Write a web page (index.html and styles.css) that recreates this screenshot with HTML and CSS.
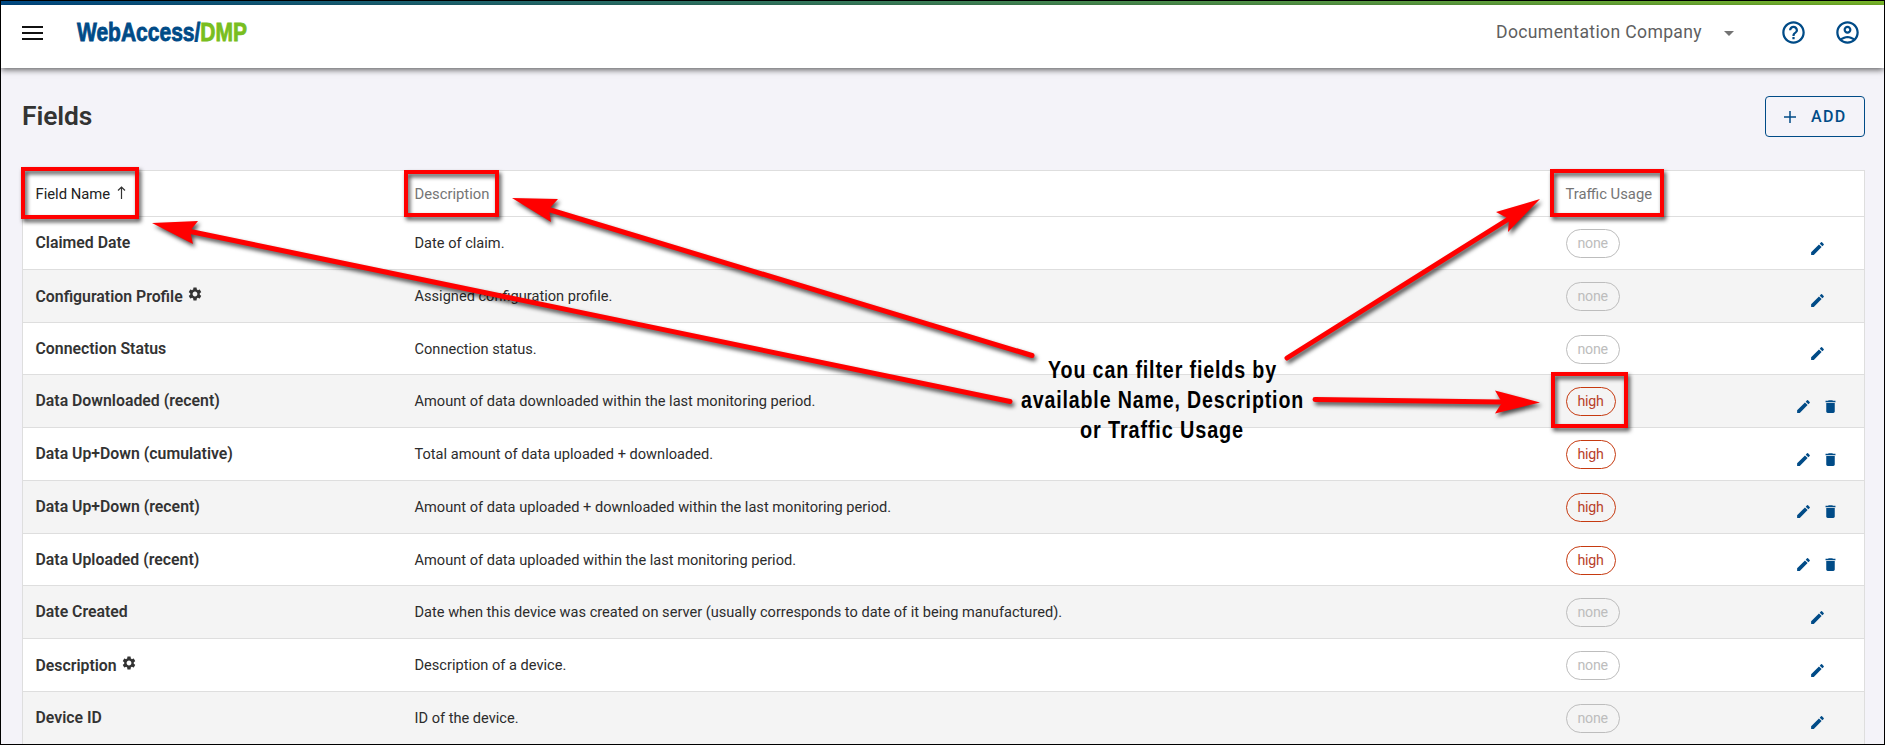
FILE: index.html
```html
<!DOCTYPE html>
<html lang="en">
<head>
<meta charset="utf-8">
<title>Fields</title>
<link rel="stylesheet" href="styles.css">
</head>
<body>
<svg class="defs" aria-hidden="true">
  <symbol id="pen" viewBox="0 0 24 24"><path d="M3 17.25V21h3.75L17.81 9.94l-3.75-3.75L3 17.25zM20.71 7.04a1 1 0 0 0 0-1.41l-2.34-2.34a1 1 0 0 0-1.41 0l-1.83 1.83 3.75 3.75 1.83-1.83z"/></symbol>
  <symbol id="bin" viewBox="0 0 24 24"><path d="M6 19c0 1.100.9 2 2 2h8c1.100 0 2-.9 2-2V7H6v12zM19 4h-3.500l-1-1h-5l-1 1H5v2h14V4z"/></symbol>
  <symbol id="gear" viewBox="0 0 24 24"><path d="M19.140 12.940c.040-.3.060-.610.060-.940 0-.320-.020-.640-.070-.940l2.030-1.580c.180-.140.230-.410.120-.610l-1.920-3.320c-.120-.220-.370-.290-.590-.220l-2.390.960c-.5-.380-1.030-.7-1.620-.940l-.360-2.540c-.040-.240-.240-.410-.480-.410h-3.840c-.240 0-.430.170-.470.410l-.360 2.540c-.590.240-1.130.570-1.620.940l-2.390-.960c-.220-.080-.470 0-.590.220L2.740 8.870c-.120.210-.080.470.120.610l2.030 1.580c-.050.3-.090.630-.090.940s.020.640.070.940l-2.030 1.580c-.180.140-.230.410-.120.610l1.920 3.320c.120.220.370.290.590.220l2.390-.960c.5.380 1.030.7 1.620.940l.360 2.540c.050.240.240.410.480.410h3.840c.240 0 .440-.170.470-.410l.360-2.540c.590-.240 1.130-.560 1.620-.940l2.390.960c.220.080.470 0 .590-.220l1.920-3.320c.120-.220.070-.470-.120-.610l-2.010-1.580zM12 15.600c-1.980 0-3.600-1.620-3.600-3.600s1.620-3.600 3.600-3.600 3.600 1.620 3.600 3.600-1.620 3.600-3.600 3.600z"/></symbol>
</svg>
<div class="app">
  <div class="stripe"></div>
  <header class="topbar">
    <svg class="menu" viewBox="0 0 21 14"><path d="M0 1h21M0 7h21M0 13h21"/></svg>
    <svg class="logo" viewBox="0 0 170 26"><text class="logo-a" x="0" y="20" textLength="170" lengthAdjust="spacingAndGlyphs">WebAccess/<tspan class="logo-b">DMP</tspan></text></svg>
    <span class="company">Documentation Company</span>
    <span class="caret"></span>
    <svg class="round help" viewBox="0 0 24 24"><path d="M11 18h2v-2h-2v2zm1-16C6.480 2 2 6.480 2 12s4.480 10 10 10 10-4.480 10-10S17.520 2 12 2zm0 18c-4.410 0-8-3.590-8-8s3.590-8 8-8 8 3.590 8 8-3.590 8-8 8zm0-14c-2.210 0-4 1.790-4 4h2c0-1.100.9-2 2-2s2 .9 2 2c0 2-3 1.750-3 5h2c0-2.250 3-2.500 3-5 0-2.210-1.790-4-4-4z"/></svg>
    <svg class="round user" viewBox="0 0 24 24"><path fill-rule="evenodd" d="M12 2C6.480 2 2 6.480 2 12s4.480 10 10 10 10-4.480 10-10S17.520 2 12 2zM7.350 18.500C8.660 17.560 10.260 17 12 17s3.340.56 4.650 1.500C15.340 19.440 13.740 20 12 20s-3.340-.56-4.650-1.500zm10.790-1.380C16.450 15.800 14.320 15 12 15s-4.450.8-6.140 2.120C4.700 15.730 4 13.950 4 12c0-4.420 3.580-8 8-8s8 3.580 8 8c0 1.950-.7 3.730-1.860 5.120zM12 6c-1.930 0-3.500 1.570-3.500 3.500S10.070 13 12 13s3.500-1.570 3.500-3.500S13.930 6 12 6zm0 5c-.83 0-1.500-.67-1.500-1.500S11.170 8 12 8s1.500.67 1.500 1.500S12.830 11 12 11z"/></svg>
  </header>
  <main class="page">
    <div class="heading">
      <h1>Fields</h1>
      <button class="add"><svg viewBox="0 0 12 12"><path d="M6 0v12M0 6h12"/></svg><span>ADD</span></button>
    </div>
    <div class="table">
      <div class="row head"><div class="name">Field Name<svg class="sort" viewBox="0 0 9 13"><path d="M4.500 13V1M1 4.500l3.500-3.500L8 4.500"/></svg></div><div>Description</div><div>Traffic Usage</div><div></div></div>
      <div class="row"><div class="name">Claimed Date</div><div>Date of claim.</div><div><span class="chip">none</span></div><div class="acts"><svg><use href="#pen"/></svg></div></div>
      <div class="row"><div class="name">Configuration Profile<svg class="gear"><use href="#gear"/></svg></div><div>Assigned configuration profile.</div><div><span class="chip">none</span></div><div class="acts"><svg><use href="#pen"/></svg></div></div>
      <div class="row"><div class="name">Connection Status</div><div>Connection status.</div><div><span class="chip">none</span></div><div class="acts"><svg><use href="#pen"/></svg></div></div>
      <div class="row"><div class="name">Data Downloaded (recent)</div><div>Amount of data downloaded within the last monitoring period.</div><div><span class="chip high">high</span></div><div class="acts"><svg><use href="#pen"/></svg><svg><use href="#bin"/></svg></div></div>
      <div class="row"><div class="name">Data Up+Down (cumulative)</div><div>Total amount of data uploaded + downloaded.</div><div><span class="chip high">high</span></div><div class="acts"><svg><use href="#pen"/></svg><svg><use href="#bin"/></svg></div></div>
      <div class="row"><div class="name">Data Up+Down (recent)</div><div>Amount of data uploaded + downloaded within the last monitoring period.</div><div><span class="chip high">high</span></div><div class="acts"><svg><use href="#pen"/></svg><svg><use href="#bin"/></svg></div></div>
      <div class="row"><div class="name">Data Uploaded (recent)</div><div>Amount of data uploaded within the last monitoring period.</div><div><span class="chip high">high</span></div><div class="acts"><svg><use href="#pen"/></svg><svg><use href="#bin"/></svg></div></div>
      <div class="row"><div class="name">Date Created</div><div>Date when this device was created on server (usually corresponds to date of it being manufactured).</div><div><span class="chip">none</span></div><div class="acts"><svg><use href="#pen"/></svg></div></div>
      <div class="row"><div class="name">Description<svg class="gear"><use href="#gear"/></svg></div><div>Description of a device.</div><div><span class="chip">none</span></div><div class="acts"><svg><use href="#pen"/></svg></div></div>
      <div class="row"><div class="name">Device ID</div><div>ID of the device.</div><div><span class="chip">none</span></div><div class="acts"><svg><use href="#pen"/></svg></div></div>
    </div>
  </main>
  <svg class="notes" viewBox="0 0 1885 745">
    <g class="marks">
      <rect x="23" y="169" width="114" height="48"/>
      <rect x="406" y="172" width="91" height="43"/>
      <rect x="1552" y="171" width="110" height="44"/>
      <rect x="1553" y="374" width="73" height="52"/>
      <path d="M188 231L1010 401.500M547 209L1032 355.500M1507 220L1287 358M1500 402L1315 399.500"/>
      <path class="tip" d="M152 223l46-2-8 10 3 13zM512 198l46 1-9 10 2 13zM1540 199l-44 13 13 7-1 13zM1540 402.500l-45-12 7 12-7 11z"/>
    </g>
    <g class="caption">
      <text x="1048" y="377.500" textLength="229" lengthAdjust="spacingAndGlyphs">You can filter fields by</text>
      <text x="1021" y="408" textLength="283" lengthAdjust="spacingAndGlyphs">available Name, Description</text>
      <text x="1080" y="438" textLength="164" lengthAdjust="spacingAndGlyphs">or Traffic Usage</text>
    </g>
  </svg>
</div>
</body>
</html>
```
FILE: styles.css
```css
* { box-sizing: border-box; }
body { margin: 0; font-family: Roboto, "Liberation Sans", sans-serif; color: #2c2c2c; }
.defs { position: absolute; width: 0; height: 0; }
.app { position: relative; width: 1885px; height: 745px; overflow: hidden; border: 1px solid #000; background: #f4f3f9; display: flex; flex-direction: column; }
.stripe { flex: none; height: 4px; background: linear-gradient(90deg, #004b87, #7ab929); }
.topbar { flex: none; height: 63px; display: flex; align-items: flex-start; padding-left: 21px; background: #fff; box-shadow: 0 2px 6px rgba(0,0,0,.6); }
.menu { width: 21px; height: 14px; margin-top: 21px; fill: none; stroke: #111; stroke-width: 2; }
.logo { width: 170px; height: 26px; margin: 16px 0 0 34px; overflow: visible; font: bold 25px "Liberation Sans", sans-serif; stroke-width: .8; }
.logo-a { fill: #004b87; stroke: #004b87; }
.logo-b { fill: #78be20; stroke: #78be20; }
.company { margin: 15px 0 0 auto; font-size: 17.600px; line-height: 24px; letter-spacing: .34px; color: #5f5f5f; }
.caret { margin: 26px 46px 0 22px; border: 5px solid transparent; border-top-color: #737373; border-bottom: 0; }
.round { width: 27px; height: 27px; margin-top: 14px; fill: #004b87; }
.help { margin-right: 27px; }
.user { margin-right: 23px; }
.page { padding: 28px 19px 0 21px; }
.heading { height: 74px; display: flex; justify-content: space-between; align-items: flex-start; }
h1 { margin: 4px 0 0; font-size: 26.400px; line-height: 32px; font-weight: 600; letter-spacing: -.1px; color: #333; }
.add { width: 100px; height: 41px; display: flex; align-items: center; padding: 0 0 0 18px; border: 1px solid #004b87; border-radius: 4px; background: transparent; color: #004b87; font: 500 16px Roboto, sans-serif; letter-spacing: 1.400px; }
.add svg { width: 12px; height: 12px; margin-right: 15px; fill: none; stroke: #004b87; stroke-width: 1.500; }
.table { border: 1px solid #dedede; border-bottom: 0; background: #fff; }
.row { display: grid; grid-template-columns: 379px 1151px 205px 1fr; height: 52.780px; padding-left: 12.500px; border-bottom: 1px solid #dedede; font-size: 14.600px; line-height: 20px; }
.row > div { padding-top: 16px; }
.row:nth-child(odd):not(.head) { background: #f4f4f4; }
.row .name { font-size: 15.840px; font-weight: 600; color: #333; }
.head { height: 46px; color: #757575; font-size: 14.800px; font-weight: 450; }
.head > div { padding-top: 13px; }
.row.head .name { font-size: 14.800px; font-weight: 450; color: #222; }
.sort { width: 9px; height: 13px; margin-left: 7px; fill: none; stroke: #333; stroke-width: 1.200; }
.gear { width: 16px; height: 16px; margin-left: 4px; fill: #333; }
.row > div:nth-child(3):not(:empty) { padding-top: 12px; }
.row.head > div:nth-child(3) { padding-top: 13px; }
.chip { display: inline-block; height: 29px; padding: 0 11px; border: 1px solid #bdbdbd; border-radius: 15px; line-height: 27px; font-size: 14.200px; letter-spacing: -.25px; color: #bdbdbd; }
.high { border-color: #c63a10; color: #b8402a; }
.acts { display: flex; justify-content: center; gap: 10px; }
.row .acts { padding: 22.500px 0 0; }
.acts svg { width: 17px; height: 17px; fill: #004b87; }
.notes { position: absolute; left: -1px; top: -1px; width: 1885px; height: 745px; }
.marks { fill: none; stroke: #f00; stroke-width: 4; filter: drop-shadow(2px 3px 2px rgba(0,0,0,.7)); }
.marks path { stroke-width: 5; stroke-linecap: round; }
.marks .tip { fill: #f00; stroke: none; }
.caption { font: bold 23px "Liberation Sans", sans-serif; letter-spacing: 1px; fill: #000; }
```
